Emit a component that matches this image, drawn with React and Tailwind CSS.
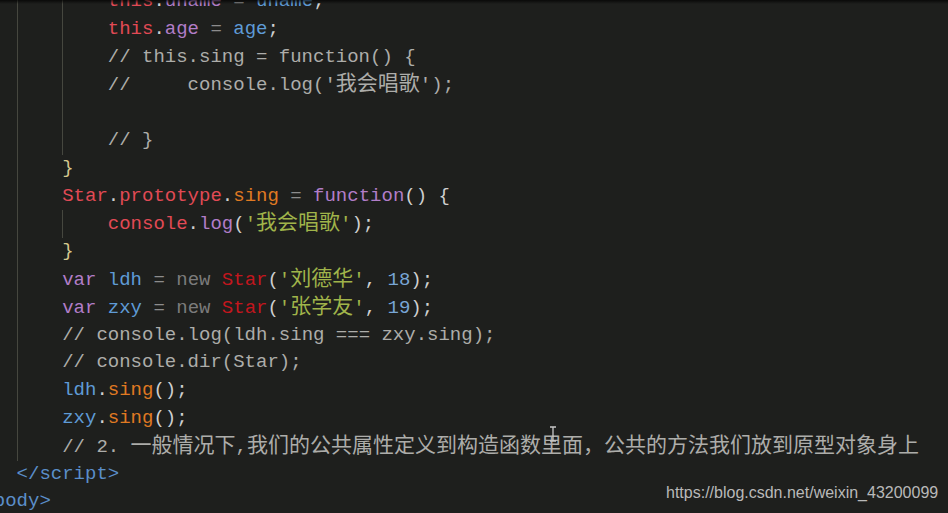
import React from "react"

// token colour classes
const C = {
  red: "text-[#e14a55]",
  dred: "text-[#c3161d]",
  pur: "text-[#b27dc8]",
  blu: "text-[#5f9bd6]",
  org: "text-[#e07a22]",
  grn: "text-[#a0b44a]",
  num: "text-[#78a6d6]",
  gry: "text-[#7b7b7b]",
  op: "text-[#8c8c8c]",
  pun: "text-[#cfcfcf]",
  cmt: "text-[#adadaa]",
  brc: "text-[#d6c88e]",
  tag: "text-[#5b8ec9]",
}

const lines = [
  { indent: 3, guides: [1, 2], toks: [["red", "this"], ["pun", "."], ["pur", "uname"], ["op", " = "], ["blu", "uname"], ["pun", ";"]] },
  { indent: 3, guides: [1, 2], toks: [["red", "this"], ["pun", "."], ["pur", "age"], ["op", " = "], ["blu", "age"], ["pun", ";"]] },
  { indent: 3, guides: [1, 2], toks: [["cmt", "// this.sing = function() {"]] },
  { indent: 3, guides: [1, 2], toks: [["cmt", "//     console.log('我会唱歌');"]] },
  { indent: 3, guides: [1, 2], toks: [] },
  { indent: 3, guides: [1, 2], toks: [["cmt", "// }"]] },
  { indent: 2, guides: [1], toks: [["brc", "}"]] },
  {
    indent: 2,
    guides: [1],
    toks: [["red", "Star"], ["pun", "."], ["red", "prototype"], ["pun", "."], ["org", "sing"], ["op", " = "], ["pur", "function"], ["pun", "() {"]],
  },
  { indent: 3, guides: [1, 2], toks: [["red", "console"], ["pun", "."], ["pur", "log"], ["pun", "("], ["grn", "'我会唱歌'"], ["pun", ");"]] },
  { indent: 2, guides: [1], toks: [["brc", "}"]] },
  {
    indent: 2,
    guides: [1],
    toks: [["pur", "var "], ["blu", "ldh"], ["op", " = "], ["gry", "new "], ["dred", "Star"], ["pun", "("], ["grn", "'刘德华'"], ["pun", ", "], ["num", "18"], ["pun", ");"]],
  },
  {
    indent: 2,
    guides: [1],
    toks: [["pur", "var "], ["blu", "zxy"], ["op", " = "], ["gry", "new "], ["dred", "Star"], ["pun", "("], ["grn", "'张学友'"], ["pun", ", "], ["num", "19"], ["pun", ");"]],
  },
  { indent: 2, guides: [1], toks: [["cmt", "// console.log(ldh.sing === zxy.sing);"]] },
  { indent: 2, guides: [1], toks: [["cmt", "// console.dir(Star);"]] },
  { indent: 2, guides: [1], toks: [["blu", "ldh"], ["pun", "."], ["org", "sing"], ["pun", "();"]] },
  { indent: 2, guides: [1], toks: [["blu", "zxy"], ["pun", "."], ["org", "sing"], ["pun", "();"]] },
  { indent: 2, guides: [1], toks: [["cmt", "// 2. 一般情况下,我们的公共属性定义到构造函数里面，公共的方法我们放到原型对象身上"]] },
  { indent: 1, guides: [], toks: [["tag", "</script>"]] },
  { indent: 0, guides: [], toks: [["tag", "</body>"]] },
]

// split a token so Chinese runs get the CJK face
function Runs({ text }) {
  const parts = text.split(/([\u3000-\u9fff\uff00-\uffef]+)/)
  return parts.map((p, i) =>
    /[\u3000-\u9fff\uff00-\uffef]/.test(p) ? (
      <span key={i} className="font-['Noto_Sans_CJK_SC',sans-serif] text-[21px] leading-none">
        {p}
      </span>
    ) : (
      <span key={i}>{p}</span>
    )
  )
}

function Line({ line }) {
  return (
    <div className="flex h-[27.8px] whitespace-pre">
      {Array.from({ length: line.indent }).map((_, i) => (
        <span
          key={i}
          className={`w-[45.6px] shrink-0 ${line.guides.includes(i) ? "border-l border-[#46473f]" : ""}`}
        />
      ))}
      <span>
        {line.toks.map(([c, text], i) => (
          <span key={i} className={C[c]}>
            <Runs text={text} />
          </span>
        ))}
      </span>
    </div>
  )
}

export default function App() {
  return (
    <div className="relative h-[513px] w-[948px] overflow-hidden bg-[#1e1f1d]">
      <div className="-ml-[29px] -mt-[12px] font-['Liberation_Mono',monospace] text-[19px] leading-[27.8px]">
        {lines.map((l, i) => (
          <Line key={i} line={l} />
        ))}
      </div>

      {/* scroll shadow */}
      <div className="absolute inset-x-0 top-0 h-[4px] bg-linear-to-b from-black/70 to-transparent" />

      {/* text cursor */}
      <svg className="absolute left-[548px] top-[426px]" width="10" height="16" viewBox="0 0 10 16">
        <path d="M2 1h6M5 1v14M2 15h6" stroke="#c8c8c8" strokeWidth="1.3" fill="none" />
      </svg>

      {/* watermark */}
      <div className="absolute left-[666px] top-[482px] font-['Liberation_Sans',Arial,sans-serif] text-[16px] leading-[22px] text-[#b9b9b9]">
        https://blog.csdn.net/weixin_43200099
      </div>
    </div>
  )
}
